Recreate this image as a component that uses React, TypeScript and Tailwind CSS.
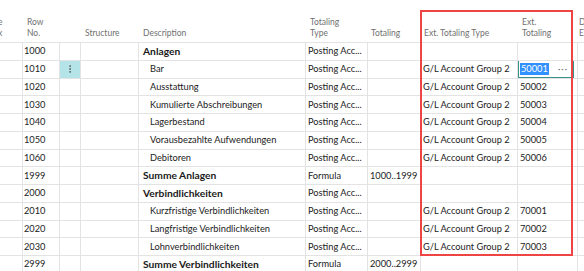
import { MoreVertical } from "lucide-react";

type Row = {
    no: string;
    desc: string;
    bold?: boolean;
    type: string;
    totaling?: string;
    extType?: string;
    ext?: string;
};

const rows: Row[] = [
    { no: "1000", desc: "Anlagen", bold: true, type: "Posting Acc..." },
    { no: "1010", desc: "Bar", type: "Posting Acc...", extType: "G/L Account Group 2", ext: "50001" },
    { no: "1020", desc: "Ausstattung", type: "Posting Acc...", extType: "G/L Account Group 2", ext: "50002" },
    { no: "1030", desc: "Kumulierte Abschreibungen", type: "Posting Acc...", extType: "G/L Account Group 2", ext: "50003" },
    { no: "1040", desc: "Lagerbestand", type: "Posting Acc...", extType: "G/L Account Group 2", ext: "50004" },
    { no: "1050", desc: "Vorausbezahlte Aufwendungen", type: "Posting Acc...", extType: "G/L Account Group 2", ext: "50005" },
    { no: "1060", desc: "Debitoren", type: "Posting Acc...", extType: "G/L Account Group 2", ext: "50006" },
    { no: "1999", desc: "Summe Anlagen", bold: true, type: "Formula", totaling: "1000..1999" },
    { no: "2000", desc: "Verbindlichkeiten", bold: true, type: "Posting Acc..." },
    { no: "2010", desc: "Kurzfristige Verbindlichkeiten", type: "Posting Acc...", extType: "G/L Account Group 2", ext: "70001" },
    { no: "2020", desc: "Langfristige Verbindlichkeiten", type: "Posting Acc...", extType: "G/L Account Group 2", ext: "70002" },
    { no: "2030", desc: "Lohnverbindlichkeiten", type: "Posting Acc...", extType: "G/L Account Group 2", ext: "70003" },
    { no: "2999", desc: "Summe Verbindlichkeiten", bold: true, type: "Formula", totaling: "2000..2999" },
];

const cell = "h-full border-r border-[#e3e3e3] flex items-center overflow-hidden whitespace-nowrap";

function HeaderCell({ w, lines, cls = "" }: { w: string; lines: string[]; cls?: string }) {
    return (
        <div className={`${w} h-full flex flex-col justify-end pb-[3px] overflow-hidden whitespace-nowrap leading-[11px] ${cls}`}>
            {lines.map((l) => (
                <div key={l}>{l}</div>
            ))}
        </div>
    );
}

export default function App() {
    return (
        <div
            className="relative w-[584px] h-[271px] overflow-hidden bg-white text-[9.25px] text-[#222]"
            style={{ fontFamily: 'Lato, "Noto Sans", sans-serif' }}
        >
            <div className="flex h-[43px] border-b border-[#e3e3e3] text-[8.5px] text-[#707070]">
                <HeaderCell w="w-[23px]" lines={["e", "x"]} cls="-ml-[2px] pr-[20px]" />
                <HeaderCell w="w-[37px]" lines={["Row", "No."]} cls="pl-[4px] ml-[2px]" />
                <HeaderCell w="w-[21px]" lines={[""]} />
                <HeaderCell w="w-[58px]" lines={["Structure"]} cls="pl-[4px]" />
                <HeaderCell w="w-[167px]" lines={["Description"]} cls="pl-[4px]" />
                <HeaderCell w="w-[62px]" lines={["Totaling", "Type"]} cls="pl-[4px]" />
                <HeaderCell w="w-[53px]" lines={["Totaling"]} cls="pl-[3px]" />
                <HeaderCell w="w-[97px]" lines={["Ext. Totaling Type"]} cls="pl-[3px]" />
                <HeaderCell w="w-[60px]" lines={["Ext.", "Totaling"]} cls="pl-[4px]" />
                <HeaderCell w="w-[6px]" lines={["De", "Ex"]} cls="pl-[1px]" />
            </div>
            {rows.map((r, i) => {
                const sel = i === 1;
                return (
                    <div key={r.no} className="flex h-[17.75px] border-b border-[#e3e3e3]">
                        <div className={`${cell} w-[23px]`}></div>
                        <div className={`${cell} w-[37px] pl-[1px]`}>{r.no}</div>
                        <div className={`${cell} w-[21px] justify-center ${sel ? "bg-[#b5e4e8]" : ""}`}>
                            {sel && <MoreVertical size={10} strokeWidth={2} className="text-[#555]" />}
                        </div>
                        <div className={`${cell} w-[58px]`}></div>
                        <div className={`${cell} w-[167px] ${r.bold ? "pl-[4px] font-bold text-[10.25px] text-[#1a1a1a]" : "pl-[11px]"}`}>
                            {r.desc}
                        </div>
                        <div className={`${cell} w-[62px] pl-[2px]`}>{r.type}</div>
                        <div className={`${cell} w-[53px] pl-[2px]`}>{r.totaling}</div>
                        <div className={`${cell} w-[97px] pl-[2px]`}>{r.extType}</div>
                        <div className={`${cell} w-[60px] ${sel ? "" : "pl-[2px]"}`}>
                            {sel ? (
                                <div className="h-[18px] w-[56px] -mt-[1px] border-[1.5px] border-[#3a918c] flex items-center justify-between pl-[1px] pr-[5px] bg-white">
                                    <span className="bg-[#3390ff] text-white leading-[12px] px-[1px]">{r.ext}</span>
                                    <span className="text-[#666] text-[9px] tracking-[1px]">···</span>
                                </div>
                            ) : (
                                r.ext
                            )}
                        </div>
                        <div className="w-[6px] h-full"></div>
                    </div>
                );
            })}
            <div className="absolute left-[420px] top-[10px] w-[153px] h-[246px] border-2 border-[#ef4444] pointer-events-none"></div>
        </div>
    );
}
